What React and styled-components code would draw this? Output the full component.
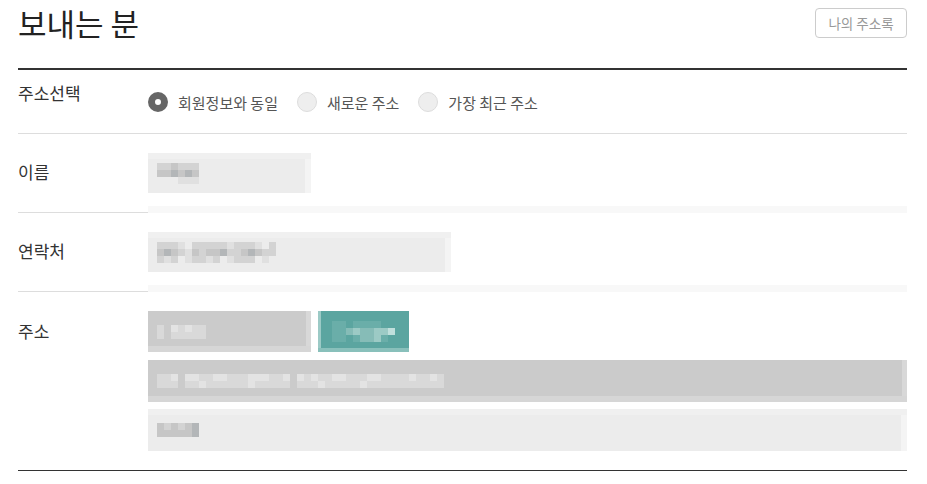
import React from 'react'
import styled, { createGlobalStyle } from 'styled-components'

const COLORS = {
  a: '#e0e0e0',
  b: '#d3d3d3',
  c: '#c6c6c6',
  d: '#b3b6b8',
  e: '#d9d9d9',
  f: '#e3e3e3',
  t: '#6aaea9',
  u: '#86bcb7',
  v: '#9ccac5',
  w: '#c0dfdc',
}

const mosaics = {
  name: ['bbcbbb', 'ccdcdc', '...aaa'],
  phone: ['bbba.bbbbbabbba.b', 'cdcbacbccdbbcdcbb', 'bab.abbab.abbb.a.'],
  zip: ['e.fefee', 'e.eeeee'],
  zipBtn: ['tt.tttt..', 'ttuvuuvvw', 'tt.tuuvt.'],
  addr1: [
    'eef.ffeeffeeefffeef.fefeeffeeeffeeeefeefe.',
    'eee.eefeeeeeefeeeee.eeefeeeeefeeeeeeeeeee.',
  ],
  addr2: ['cbcbcd', 'cccccd'],
}

// pixelated (privacy-masked) content, drawn as a grid of 7px cells
const Mosaic = ({ rows }) => {
  const w = rows[0].length * 7
  const h = rows.length * 7
  return (
    <svg width={w} height={h} viewBox={`0 0 ${w} ${h}`}>
      {rows.map((row, y) =>
        row.split('').map((ch, x) =>
          ch === '.' ? null : (
            <rect key={`${x}-${y}`} x={x * 7} y={y * 7} width="7" height="7" fill={COLORS[ch]} />
          )
        )
      )}
    </svg>
  )
}

const Radio = ({ checked, label }) => (
  <Option>
    <Dot $checked={checked} />
    <span>{label}</span>
  </Option>
)

const App = () => {
  return (
    <>
      <GlobalStyle />
      <Wrap>
        <Header>
          <Title>보내는 분</Title>
          <BookBtn>나의 주소록</BookBtn>
        </Header>

        <Table>
          <Row>
            <Label $top={10}>주소선택</Label>
            <Field>
              <Options>
                <Radio checked label="회원정보와 동일" />
                <Radio label="새로운 주소" />
                <Radio label="가장 최근 주소" />
              </Options>
            </Field>
          </Row>

          <Row>
            <Label $top={25}>이름</Label>
            <Field $pad>
              <Input $w={163}>
                <Mosaic rows={mosaics.name} />
              </Input>
              <Strip />
            </Field>
          </Row>

          <Row>
            <Label $top={25}>연락처</Label>
            <Field $pad>
              <Input $w={303}>
                <Mosaic rows={mosaics.phone} />
              </Input>
              <Strip />
            </Field>
          </Row>

          <Row $last>
            <Label $top={26}>주소</Label>
            <Field $pad $bottom>
              <Stack>
                <ZipLine>
                  <Input $w={163} $h={41} $tone="dark">
                    <Mosaic rows={mosaics.zip} />
                  </Input>
                  <ZipBtn>
                    <Mosaic rows={mosaics.zipBtn} />
                  </ZipBtn>
                </ZipLine>
                <Input $h={42} $tone="dark" $full>
                  <Mosaic rows={mosaics.addr1} />
                </Input>
                <Input $h={42} $full>
                  <Mosaic rows={mosaics.addr2} />
                </Input>
              </Stack>
            </Field>
          </Row>
        </Table>
      </Wrap>
    </>
  )
}

export default App

const GlobalStyle = createGlobalStyle`
  body {
    margin: 0;
    background: #fff;
    font-family: "Noto Sans CJK KR", "Noto Sans", sans-serif;
    color: #333;
  }
`

const Wrap = styled.div`
  width: 889px;
  margin-left: 18px;
`

const Header = styled.div`
  display: flex;
  justify-content: space-between;
  align-items: flex-start;
  height: 70px;
  border-bottom: 2px solid #333;
  box-sizing: border-box;
`

const Title = styled.h2`
  margin: 0;
  font-size: 31px;
  font-weight: 400;
  line-height: 46px;
  color: #222;
`

const BookBtn = styled.button`
  margin-top: 8px;
  width: 92px;
  height: 30px;
  border: 1px solid #ccc;
  border-radius: 4px;
  background: #fff;
  color: #999;
  font-family: inherit;
  font-size: 13.5px;
  padding: 0;
  cursor: pointer;
`

const Table = styled.div`
  border-bottom: 1px solid #333;
`

const Row = styled.div`
  display: grid;
  grid-template-columns: 130px 1fr;
  border-bottom: ${p => (p.$last ? 'none' : '1px solid #ddd')};
`

const Label = styled.div`
  padding-top: ${p => p.$top}px;
  font-size: 17px;
  line-height: 26px;
  color: #333;
`

const Field = styled.div`
  padding-top: ${p => (p.$pad ? 19 : 0)}px;
  padding-bottom: ${p => (p.$bottom ? 19 : 0)}px;
  margin-bottom: ${p => (p.$pad && !p.$bottom ? -1 : 0)}px;
`

const Options = styled.div`
  display: flex;
  align-items: center;
  gap: 19px;
  height: 63px;
  padding-top: 1px;
  box-sizing: border-box;
`

const Option = styled.label`
  display: flex;
  align-items: center;
  gap: 10px;
  font-size: 15px;
  color: #555;
  cursor: pointer;
`

const Dot = styled.span`
  width: 20px;
  height: 20px;
  border-radius: 50%;
  box-sizing: border-box;
  background: ${p => (p.$checked ? '#fff' : '#eee')};
  border: ${p => (p.$checked ? '7px solid #666' : '1px solid #ddd')};
`

const Input = styled.div`
  display: flex;
  align-items: center;
  width: ${p => (p.$full ? '100%' : `${p.$w}px`)};
  height: ${p => p.$h || 40}px;
  padding-left: 9px;
  box-sizing: border-box;
  background: ${p => (p.$tone === 'dark' ? '#cbcbcb' : '#ececec')};
  box-shadow: ${p =>
    p.$tone === 'dark'
      ? 'inset 0 -6px 0 #d6d6d6, inset -5px 0 0 #d8d8d8'
      : 'inset 0 6px 0 #f0f0f0, inset -6px 0 0 #f4f4f4'};
`

const Strip = styled.div`
  margin-top: 13px;
  height: 7px;
  background: #f8f8f8;
`

const Stack = styled.div`
  display: flex;
  flex-direction: column;
  gap: 7px;
`

const ZipLine = styled.div`
  display: flex;
  gap: 7px;
  margin-bottom: 1px;
`

const ZipBtn = styled.button`
  display: flex;
  align-items: center;
  justify-content: center;
  width: 91px;
  height: 41px;
  border: 0;
  padding: 0;
  background: #5ba5a0;
  box-shadow: inset 0 -4px 0 #89c0bb, inset 3px 0 0 #9ccac6;
  cursor: pointer;
`
